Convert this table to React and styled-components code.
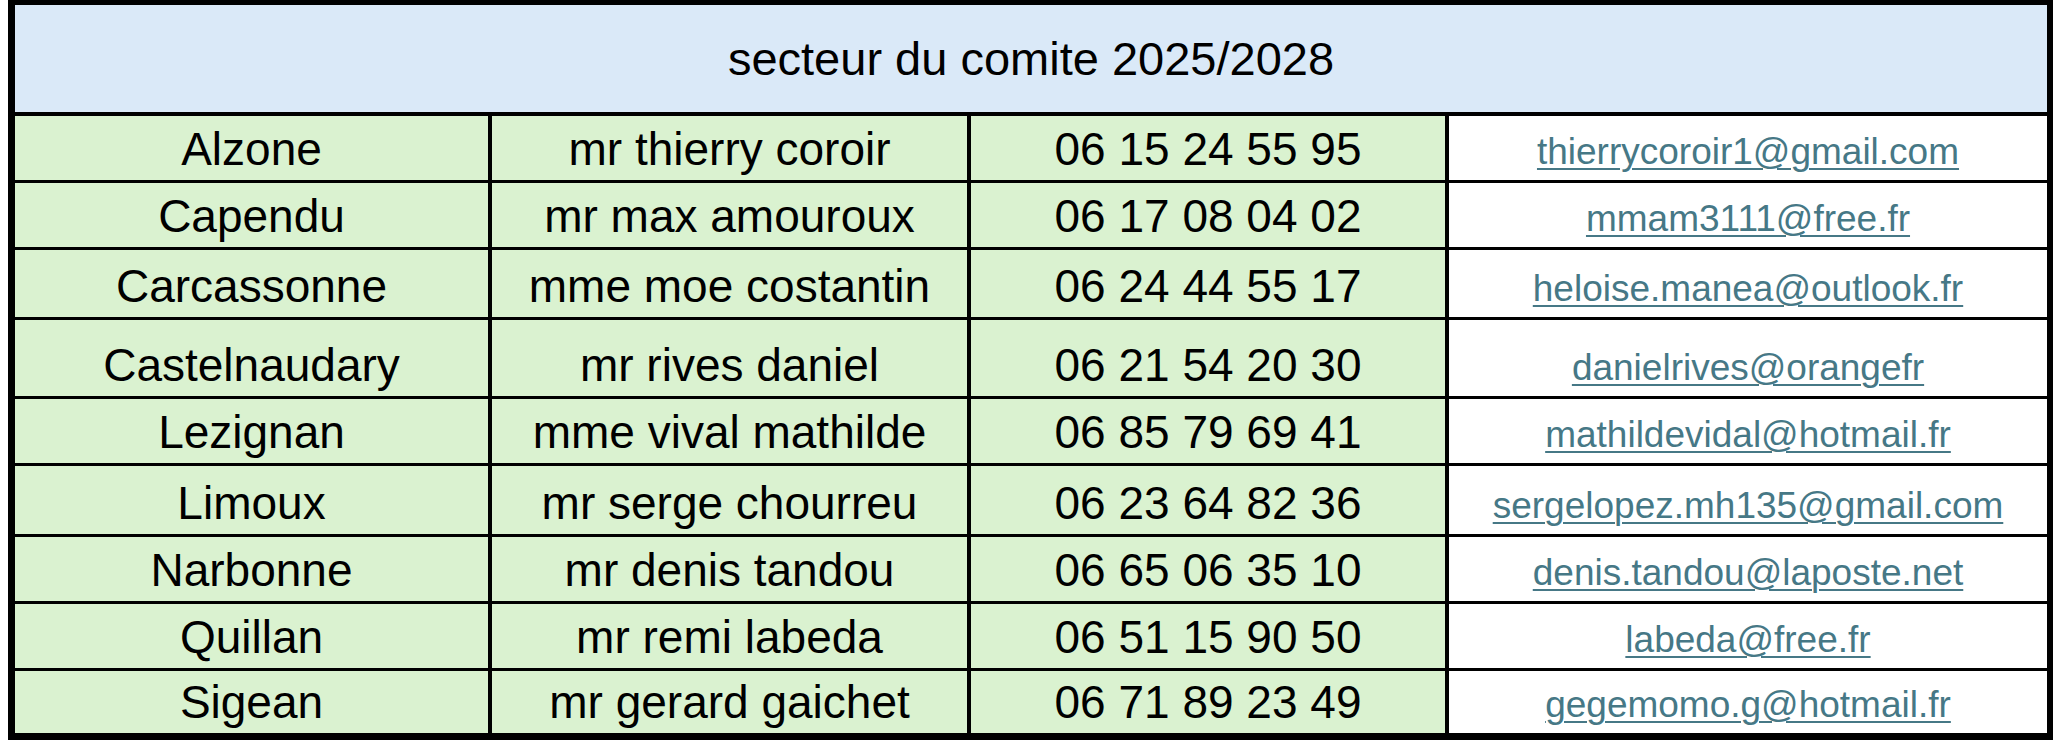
import React from 'react'
import styled, { createGlobalStyle } from 'styled-components'

const rows = [
  { town: 'Alzone', name: 'mr thierry coroir', phone: '06 15 24 55 95', mail: 'thierrycoroir1@gmail.com', h: 64 },
  { town: 'Capendu', name: 'mr max amouroux', phone: '06 17 08 04 02', mail: 'mmam3111@free.fr', h: 64 },
  { town: 'Carcassonne', name: 'mme moe costantin', phone: '06 24 44 55 17', mail: 'heloise.manea@outlook.fr', h: 67 },
  { town: 'Castelnaudary', name: 'mr rives daniel', phone: '06 21 54 20 30', mail: 'danielrives@orangefr', h: 76 },
  { town: 'Lezignan', name: 'mme vival mathilde', phone: '06 85 79 69 41', mail: 'mathildevidal@hotmail.fr', h: 64 },
  { town: 'Limoux', name: 'mr serge chourreu', phone: '06 23 64 82 36', mail: 'sergelopez.mh135@gmail.com', h: 68 },
  { town: 'Narbonne', name: 'mr denis tandou', phone: '06 65 06 35 10', mail: 'denis.tandou@laposte.net', h: 64 },
  { town: 'Quillan', name: 'mr remi labeda', phone: '06 51 15 90 50', mail: 'labeda@free.fr', h: 64 },
  { town: 'Sigean', name: 'mr gerard gaichet', phone: '06 71 89 23 49', mail: 'gegemomo.g@hotmail.fr', h: 62 },
]

const GlobalStyle = createGlobalStyle`
  body {
    margin: 0;
    background: #fff;
    font-family: "Liberation Sans", Arial, sans-serif;
  }
`

const Page = styled.div`
  padding-left: 8px;
  width: 2057px;
  box-sizing: border-box;
`

const Sheet = styled.div`
  width: 2045px;
  box-sizing: border-box;
  border-style: solid;
  border-color: #000;
  border-width: 5px 6px 7px 7px;
  background: #000;
  display: grid;
  grid-template-columns: 473px 475px 474px 598px;
  grid-template-rows: ${({ heights }) => heights.map((h) => `${h}px`).join(' ')};
  column-gap: 4px;
  row-gap: 3px;
`

const Title = styled.div`
  grid-column: 1 / -1;
  background: #dae9f8;
  display: flex;
  align-items: center;
  justify-content: center;
  font-size: 47px;
  color: #000;
  margin-bottom: 1px;
`

// excel cells sit on the bottom edge, so taller rows push the text down
const Cell = styled.div`
  background: ${({ $plain }) => ($plain ? '#fff' : '#daf2d0')};
  display: flex;
  align-items: flex-end;
  justify-content: center;
  font-size: 46px;
  line-height: 53px;
  color: #000;
  white-space: nowrap;
  padding-bottom: 4px;
`

const Mail = styled.a`
  font-size: 37px;
  line-height: 43px;
  color: #467886;
  text-decoration: underline;
  text-underline-offset: 4px;
  text-decoration-thickness: 2px;
  padding-bottom: 3px;
`

const App = () => {
  const heights = [108, ...rows.map((r) => r.h)]

  return (
    <Page>
      <GlobalStyle />
      <Sheet heights={heights}>
        <Title>secteur du comite 2025/2028</Title>
        {rows.map((r) => (
          <React.Fragment key={r.town}>
            <Cell>{r.town}</Cell>
            <Cell>{r.name}</Cell>
            <Cell>{r.phone}</Cell>
            <Cell $plain>
              <Mail href={`mailto:${r.mail}`}>{r.mail}</Mail>
            </Cell>
          </React.Fragment>
        ))}
      </Sheet>
    </Page>
  )
}

export default App
